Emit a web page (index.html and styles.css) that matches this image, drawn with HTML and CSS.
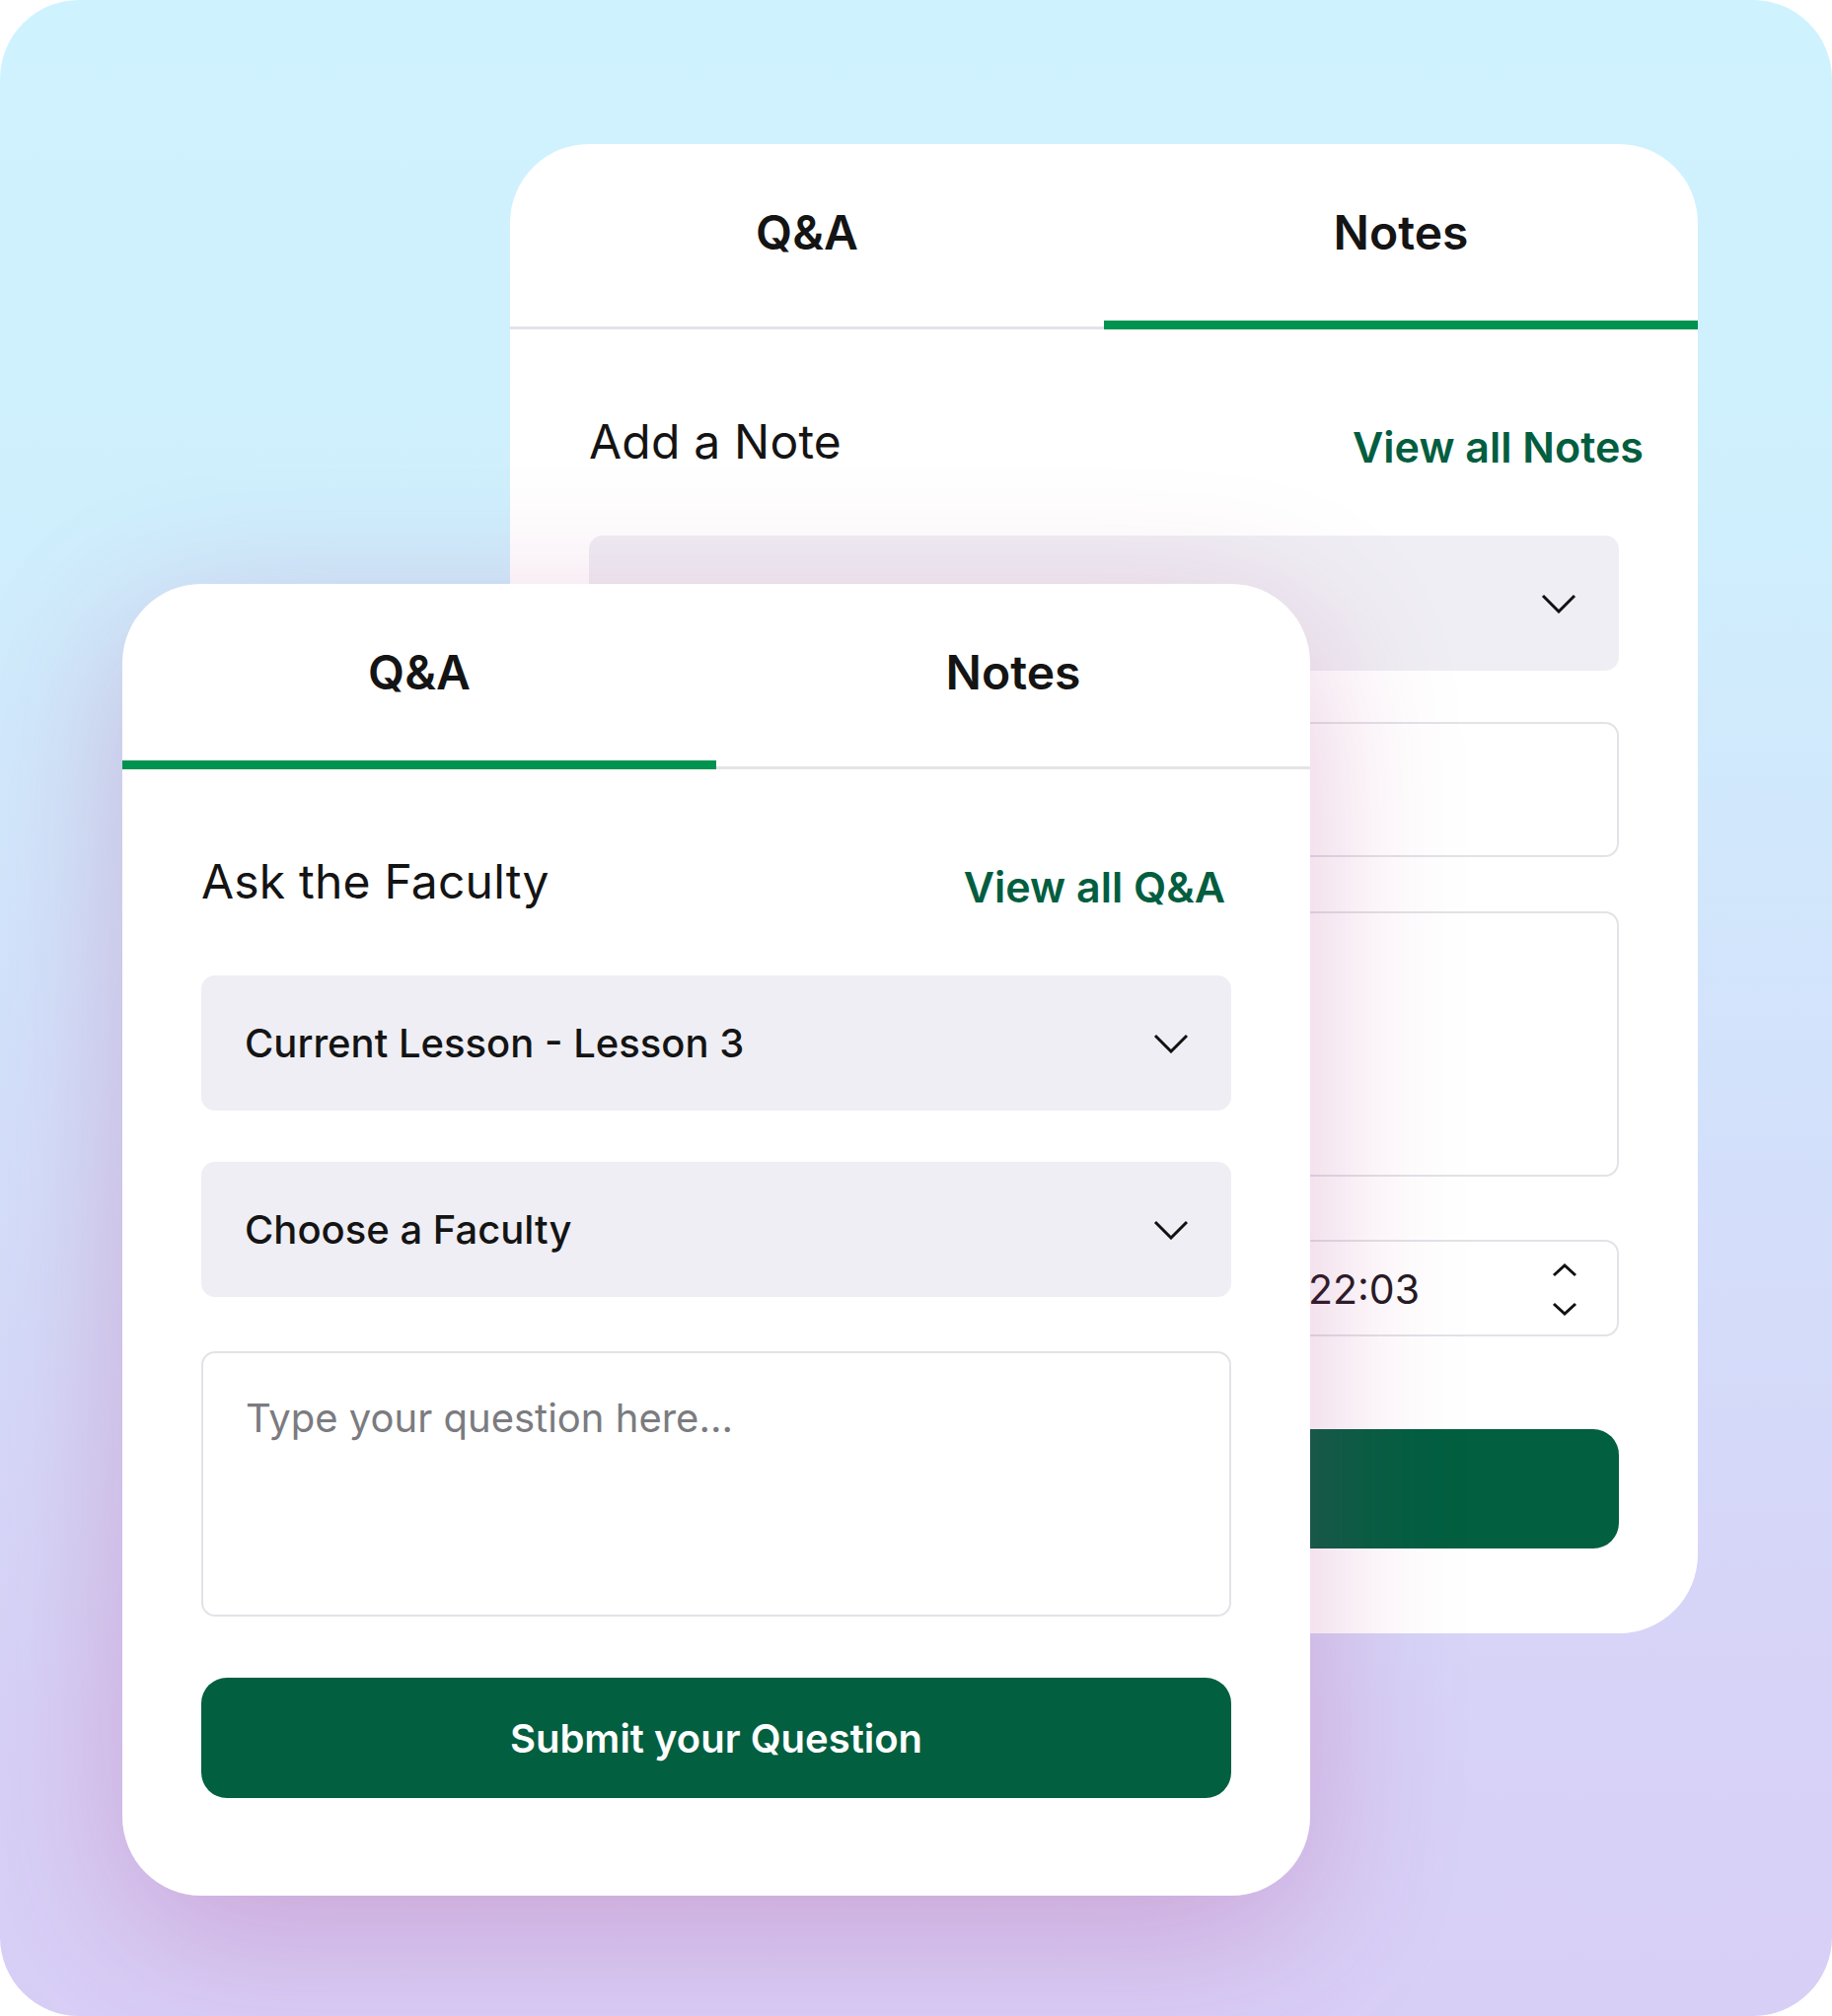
FILE: index.html
```html
<!DOCTYPE html>
<html lang="en">
<head>
  <meta charset="UTF-8">
  <meta name="viewport" content="width=device-width, initial-scale=1.0">
  <title>Ask the Faculty</title>
  <link rel="stylesheet" href="styles.css">
</head>
<body>

<main class="stage">

  <!-- Notes panel (behind) -->
  <section class="panel panel--notes">
    <nav class="tabs">
      <div class="tab">Q&amp;A</div>
      <div class="tab tab--active">Notes</div>
    </nav>
    <div class="panel-body">
      <div class="panel-head">
        <h2 class="panel-title">Add a Note</h2>
        <a class="panel-link" href="#">View all Notes</a>
      </div>
      <div class="select">
        <span>Current Lesson - Lesson 3</span>
        <svg class="chevron" viewBox="0 0 36 20"><polyline points="2,2 18,18 34,2"/></svg>
      </div>
      <div class="field field--input"></div>
      <div class="field field--area"></div>
      <div class="field time-field">
        <span class="time-label">Timestamp</span>
        <span class="time-value">22:03</span>
        <span class="stepper">
          <svg viewBox="0 0 26 14"><polyline points="2,12 13,2 24,12"/></svg>
          <svg viewBox="0 0 26 14"><polyline points="2,2 13,12 24,2"/></svg>
        </span>
      </div>
      <button class="submit submit--notes">Save Note</button>
    </div>
  </section>

  <!-- Q&A panel (front) -->
  <section class="panel panel--qa">
    <nav class="tabs">
      <div class="tab tab--active">Q&amp;A</div>
      <div class="tab">Notes</div>
    </nav>
    <div class="panel-body">
      <div class="panel-head">
        <h2 class="panel-title">Ask the Faculty</h2>
        <a class="panel-link" href="#">View all Q&amp;A</a>
      </div>
      <div class="select">
        <span>Current Lesson - Lesson 3</span>
        <svg class="chevron" viewBox="0 0 36 20"><polyline points="2,2 18,18 34,2"/></svg>
      </div>
      <div class="select select--last">
        <span>Choose a Faculty</span>
        <svg class="chevron" viewBox="0 0 36 20"><polyline points="2,2 18,18 34,2"/></svg>
      </div>
      <div class="field field--area">
        <span class="placeholder">Type your question here...</span>
      </div>
      <button class="submit">Submit your Question</button>
    </div>
  </section>

</main>

</body>
</html>
```

FILE: styles.css
```css
/* Page and backdrop */
body {
  margin: 0;
  background: #fff;
  font-family: "Inter", "Noto Sans", sans-serif;
  color: #141414;
}
.stage {
  width: 1857px;
  height: 2044px;
  border-radius: 80px;
  overflow: hidden;
  display: grid;
  align-items: start;
  justify-items: start;
  background: linear-gradient(180deg, #cff3fe 0%, #cfeffd 25%, #d3e1fb 55%, #d7d2f7 85%, #d8cff7 100%);
}

/* Panels share one grid cell and overlap */
.panel {
  grid-area: 1 / 1;
  width: 1204px;
  background: #fff;
  border-radius: 80px;
  overflow: hidden;
}
.panel--notes {
  margin: 146px 0 0 517px;
  height: 1510px;
}
.panel--qa {
  margin: 592px 0 0 124px;
  height: 1330px;
  z-index: 1;
  box-shadow: 0 40px 150px rgba(173, 48, 129, 0.28);
}

/* Tabs */
.tabs {
  display: grid;
  grid-template-columns: 1fr 1fr;
  box-shadow: inset 0 -3px 0 #e4e3e8;
}
.tab {
  height: 179px;
  display: flex;
  align-items: center;
  justify-content: center;
  font-size: 48px;
  font-weight: 600;
  line-height: 58px;
  border-bottom: 9px solid transparent;
}
.tab--active {
  border-bottom-color: #00934f;
}

/* Body */
.panel-body {
  padding: 85px 80px 0 80px;
  display: flex;
  flex-direction: column;
}
.panel-head {
  display: flex;
  justify-content: space-between;
  align-items: flex-start;
  height: 58px;
  margin: 0 6px 66px 0;
}
.panel--notes .panel-head {
  margin-right: -25px;
}
.panel-title {
  margin: 0;
  font-size: 48px;
  font-weight: 400;
  line-height: 58px;
  letter-spacing: 0.2px;
}
.panel-link {
  margin-top: 5px;
  font-size: 43px;
  line-height: 58px;
  font-weight: 600;
  color: #025e3f;
  text-decoration: none;
}

/* Selects and fields */
.select {
  height: 137px;
  box-sizing: border-box;
  padding: 0 43px 0 44px;
  display: flex;
  align-items: center;
  justify-content: space-between;
  background: #efeef4;
  border-radius: 14px;
  font-size: 40px;
  font-weight: 500;
  margin-bottom: 52px;
}
.select--last {
  margin-bottom: 55px;
}
.chevron {
  width: 36px;
  height: 20px;
  fill: none;
  stroke: #111;
  stroke-width: 3;
}
.field {
  box-sizing: border-box;
  border: 2px solid #e3e2e7;
  border-radius: 14px;
  background: #fff;
}
.field--input {
  height: 137px;
  margin-bottom: 55px;
}
.field--area {
  height: 269px;
  padding: 42px 43px;
  margin-bottom: 62px;
}
.panel--notes .field--area {
  margin-bottom: 64px;
}
.placeholder {
  font-size: 40px;
  line-height: 48px;
  color: #7b7b80;
}

/* Time field */
.time-field {
  height: 98px;
  padding: 0 40px 0 44px;
  display: flex;
  align-items: center;
  margin-bottom: 94px;
}
.time-label {
  width: 683px;
  font-size: 40px;
  color: #231a22;
}
.time-value {
  flex: 1;
  font-size: 41px;
  color: #231a22;
  padding-top: 2px;
}
.stepper {
  display: flex;
  flex-direction: column;
  gap: 25px;
  padding-top: 2px;
}
.stepper svg {
  width: 26px;
  height: 14px;
  fill: none;
  stroke: #111;
  stroke-width: 3;
}

/* Buttons */
.submit {
  height: 122px;
  border: none;
  border-radius: 26px;
  background: #025f40;
  color: #fff;
  font-family: inherit;
  font-size: 40px;
  font-weight: 600;
  cursor: pointer;
}
.submit--notes {
  height: 121px;
}
```
